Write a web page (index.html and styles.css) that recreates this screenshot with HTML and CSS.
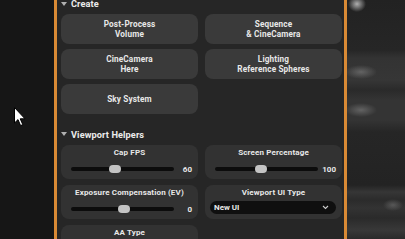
FILE: index.html
```html
<!DOCTYPE html>
<html>
<head>
<meta charset="utf-8">
<link rel="stylesheet" href="styles.css">
</head>
<body>
<div class="screen">
  <div class="left-area">
    <svg class="cursor" width="12" height="20" viewBox="0 0 12 20">
      <path d="M0.5 0.5 L0.5 16 L4 12.6 L6.6 18.6 L8.8 17.6 L6.2 11.8 L11 11.8 Z" fill="#fff" stroke="#000" stroke-width="1"/>
    </svg>
  </div>
  <div class="panel">
    <div class="content">
      <div class="section-header"><span class="tri"></span><span>Create</span></div>
      <div class="grid">
        <div class="btn">Post-Process<br>Volume</div>
        <div class="btn">Sequence<br>&amp; CineCamera</div>
        <div class="btn">CineCamera<br>Here</div>
        <div class="btn">Lighting<br>Reference Spheres</div>
        <div class="btn">Sky System</div>
      </div>
      <div class="section-header vh"><span class="tri"></span><span>Viewport Helpers</span></div>
      <div class="grid cards">
        <div class="card">
          <div class="card-title">Cap FPS</div>
          <div class="slider-row">
            <div class="track"><div class="thumb" style="left:43%"></div></div>
            <div class="val">60</div>
          </div>
        </div>
        <div class="card">
          <div class="card-title">Screen Percentage</div>
          <div class="slider-row">
            <div class="track"><div class="thumb" style="left:45%"></div></div>
            <div class="val">100</div>
          </div>
        </div>
        <div class="card">
          <div class="card-title">Exposure Compensation (EV)</div>
          <div class="slider-row">
            <div class="track"><div class="thumb" style="left:51%"></div></div>
            <div class="val">0</div>
          </div>
        </div>
        <div class="card">
          <div class="card-title">Viewport UI Type</div>
          <div class="dropdown">
            <span>New UI</span>
            <svg width="7" height="5" viewBox="0 0 7 5"><path d="M1 1 L3.5 3.5 L6 1" fill="none" stroke="#ccc" stroke-width="1.1"/></svg>
          </div>
        </div>
        <div class="card">
          <div class="card-title">AA Type</div>
        </div>
      </div>
    </div>
  </div>
  <div class="right-area"></div>
</div>
</body>
</html>
```
FILE: styles.css
```css
html, body {
  margin: 0;
  padding: 0;
  background: #151515;
  overflow: hidden;
}
.screen {
  display: flex;
  width: 405px;
  height: 239px;
  overflow: hidden;
  font-family: Roboto, "Liberation Sans", sans-serif;
}
.left-area {
  width: 54px;
  flex: none;
  background: #161616;
  position: relative;
}
.cursor {
  position: absolute;
  left: 14px;
  top: 107px;
}
.panel {
  width: 287px;
  flex: none;
  background: #262626;
  border-left: 3px solid #d98a35;
  border-right: 3px solid #d98a35;
  overflow: hidden;
}
.content {
  margin-top: -4px;
  padding-left: 4px;
}
.section-header {
  height: 15px;
  display: flex;
  align-items: center;
  color: #ececec;
  font-size: 9.2px;
  font-weight: 700;
  letter-spacing: 0.1px;
}
.section-header.vh {
  margin-top: 12px;
  height: 16px;
}
.tri {
  width: 0;
  height: 0;
  border-left: 3px solid transparent;
  border-right: 3px solid transparent;
  border-top: 4px solid #b0b0b0;
  margin-right: 4px;
}
.grid {
  display: grid;
  grid-template-columns: 137px 137px;
  column-gap: 7px;
  row-gap: 5px;
  margin-top: 3px;
}
.btn {
  height: 30px;
  border-radius: 8px;
  background: #3a3a3a;
  color: #e8e8e8;
  font-size: 8.2px;
  font-weight: 700;
  line-height: 10px;
  letter-spacing: 0.15px;
  display: flex;
  align-items: center;
  justify-content: center;
  text-align: center;
}
.cards {
  row-gap: 6px;
}
.card {
  height: 34px;
  box-sizing: border-box;
  border-radius: 8px;
  background: #323232;
  padding: 3px 6px 0 10px;
  color: #e8e8e8;
}
.card-title {
  font-size: 8px;
  font-weight: 700;
  line-height: 10px;
  text-align: center;
  letter-spacing: 0.15px;
  margin-left: -4px;
}
.slider-row {
  display: flex;
  align-items: center;
  height: 10px;
  margin-top: 6px;
}
.track {
  flex: 1;
  height: 4px;
  border-radius: 2px;
  background: #0c0c0c;
  position: relative;
}
.thumb {
  position: absolute;
  top: -2px;
  width: 12px;
  height: 8px;
  margin-left: -6px;
  border-radius: 4px;
  background: #c4c4c4;
}
.val {
  min-width: 14px;
  margin-left: 4px;
  text-align: right;
  font-size: 8px;
  font-weight: 700;
}
.dropdown {
  margin: 3px 0 0 -5px;
  height: 13px;
  border-radius: 7px;
  background: #0f0f0f;
  display: flex;
  align-items: center;
  justify-content: space-between;
  padding: 0 7px 0 4px;
  font-size: 8px;
  font-weight: 700;
  color: #e8e8e8;
}
.right-area {
  flex: 1;
  background:
    radial-gradient(ellipse 9px 8px at 10px 4px, rgba(210,210,210,0.8), rgba(210,210,210,0) 100%),
    radial-gradient(ellipse 16px 7px at 14px 72px, rgba(130,130,130,0.6), rgba(130,130,130,0) 100%),
    radial-gradient(ellipse 16px 7px at 14px 110px, rgba(130,130,130,0.6), rgba(130,130,130,0) 100%),
    radial-gradient(ellipse 10px 6px at 46px 205px, rgba(120,120,120,0.55), rgba(120,120,120,0) 100%),
    linear-gradient(180deg,
      #222 0px, #262626 50px, #333 58px, #363636 80px, #2a2a2a 90px,
      #343434 100px, #343434 120px, #262626 132px, #232323 185px,
      #363636 192px, #2b2b2b 200px, #333 208px, #2a2a2a 218px, #383838 230px, #2a2a2a 239px);
}
```
